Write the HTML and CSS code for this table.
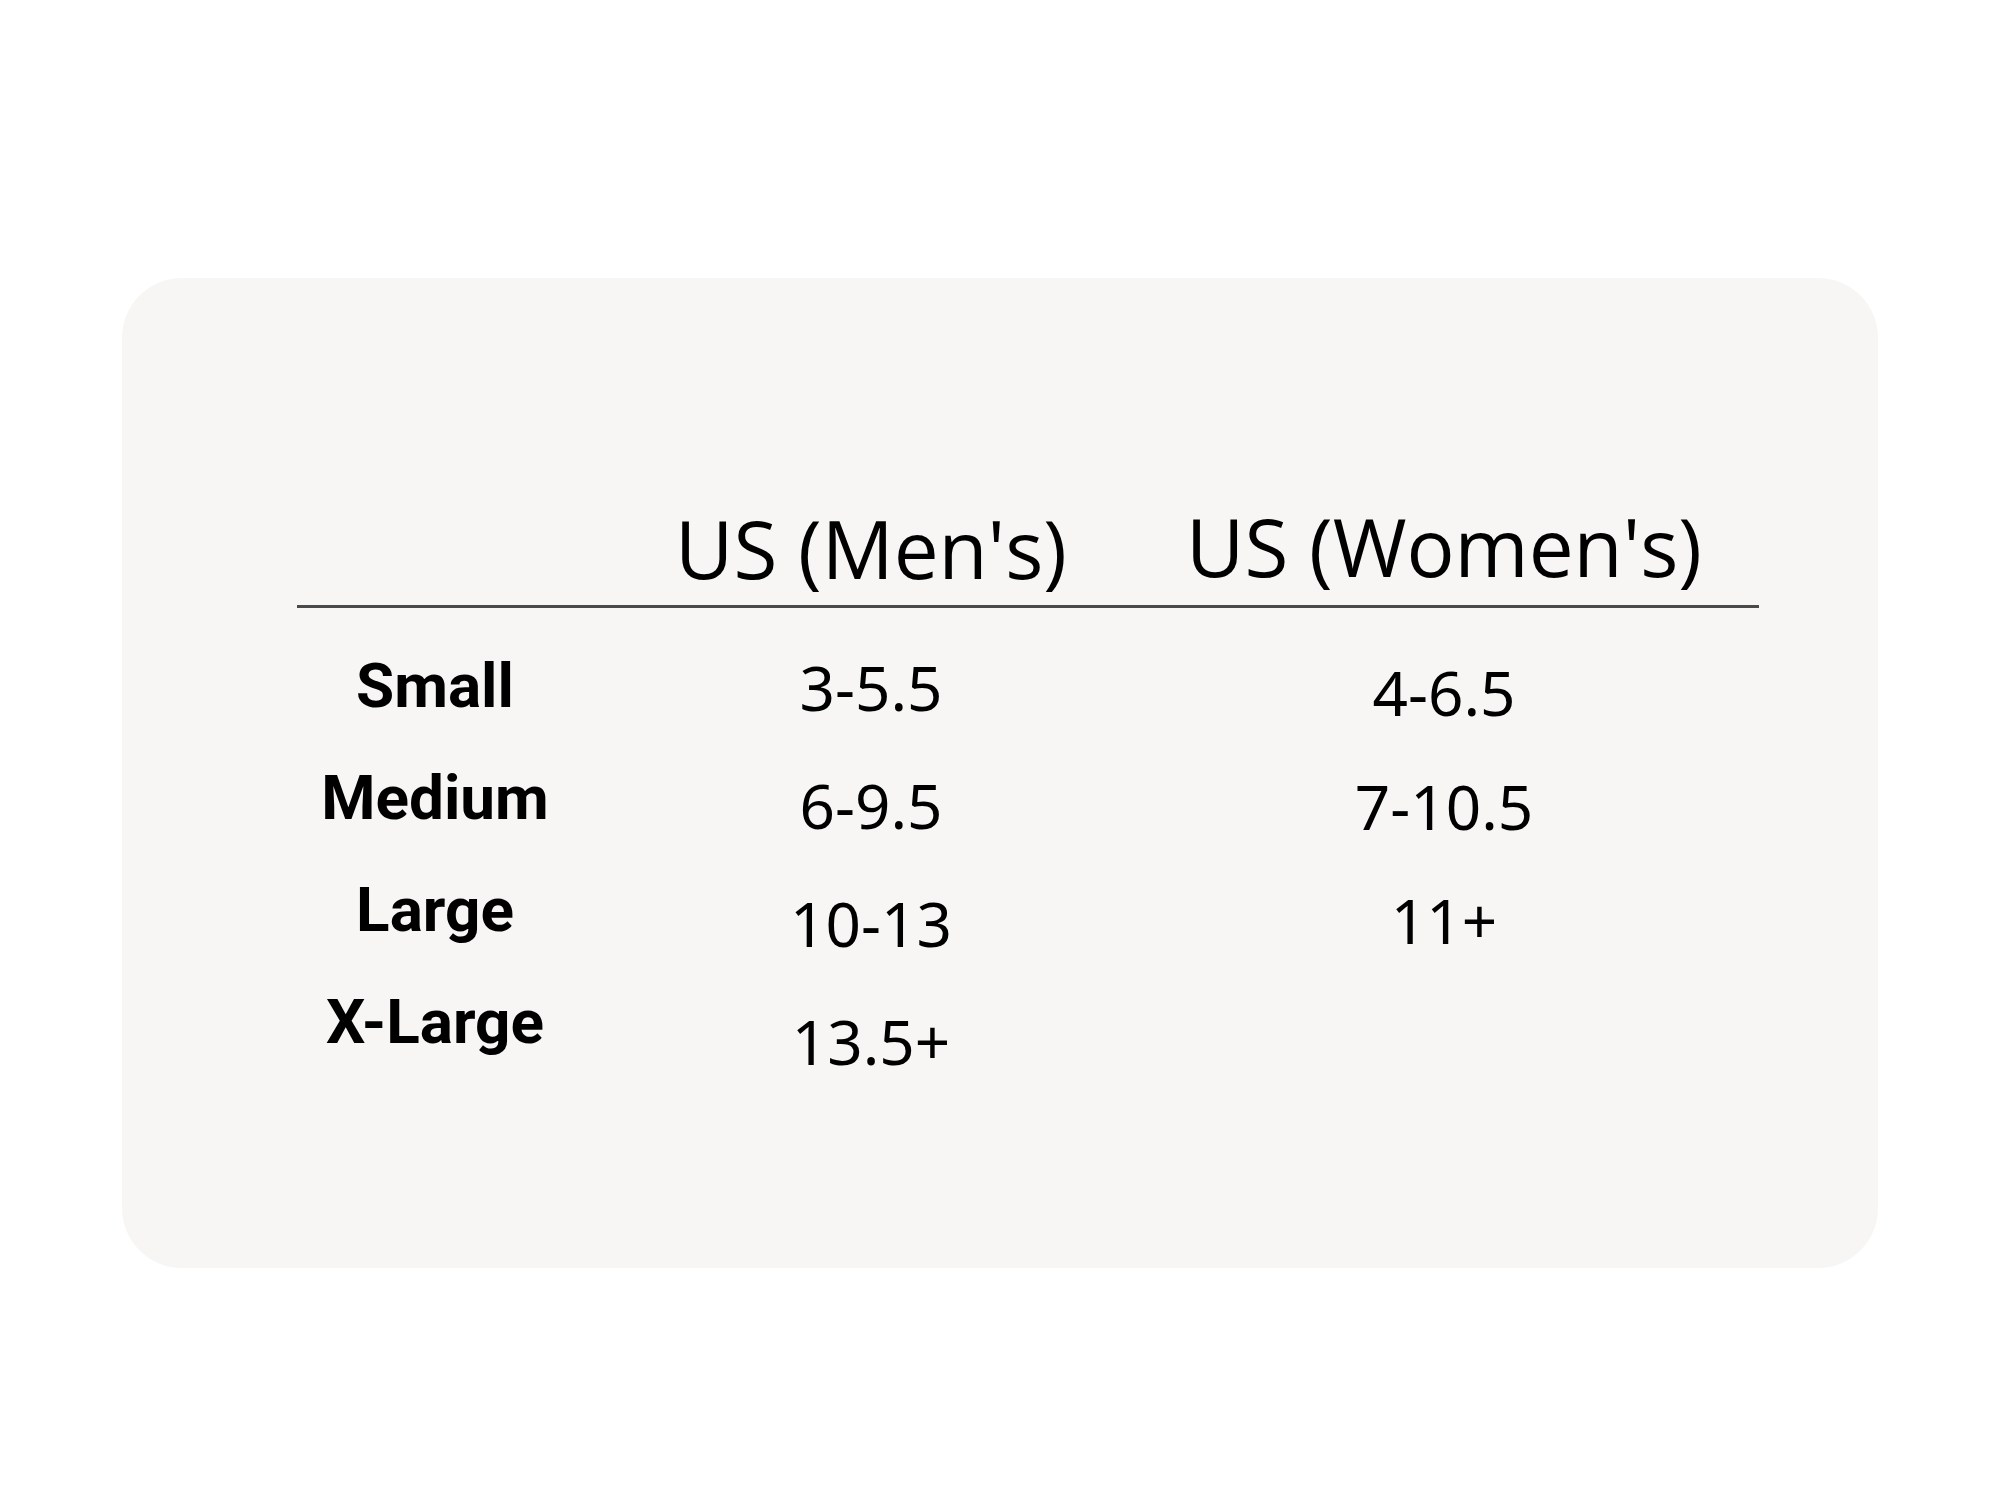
FILE: index.html
```html
<!DOCTYPE html>
<html lang="en">
<head>
<meta charset="utf-8">
<title>Size Chart</title>
<link rel="stylesheet" href="styles.css">
</head>
<body>
<div class="card">
  <div class="chart">
    <div class="head-row">
      <div class="head-empty"></div>
      <div class="head head-men">US (Men's)</div>
      <div class="head head-women">US (Women's)</div>
    </div>
    <div class="rule"></div>
    <div class="body-row">
      <div class="col labels">
        <div class="label">Small</div>
        <div class="label">Medium</div>
        <div class="label">Large</div>
        <div class="label">X-Large</div>
      </div>
      <div class="col men">
        <div class="val">3-5.5</div>
        <div class="val">6-9.5</div>
        <div class="val">10-13</div>
        <div class="val">13.5+</div>
      </div>
      <div class="col women">
        <div class="val">4-6.5</div>
        <div class="val">7-10.5</div>
        <div class="val">11+</div>
      </div>
    </div>
  </div>
</div>
</body>
</html>
```
FILE: styles.css
```css
html, body {
  margin: 0;
  padding: 0;
  background: #ffffff;
}
body {
  width: 2000px;
  height: 1500px;
  padding-top: 278px;
  padding-left: 122px;
  box-sizing: border-box;
  color: #000;
}
.card {
  width: 1756px;
  height: 990px;
  background: #f7f6f4;
  border-radius: 60px;
  box-sizing: border-box;
  padding-top: 218px;
  padding-left: 175px;
}
.chart {
  width: 1462px;
}
.head-row,
.body-row {
  display: grid;
  grid-template-columns: 276px 596px 550px;
}
.head-row {
  align-items: end;
  padding-bottom: 7px;
}
.head {
  font-family: "Open Sans", sans-serif;
  font-size: 80px;
  line-height: 100px;
  text-align: center;
  white-space: nowrap;
}
.head-women {
  padding-bottom: 2px;
}
.rule {
  height: 3px;
  background: #4a4a4a;
}
.col {
  display: flex;
  flex-direction: column;
  align-items: center;
}
.labels {
  padding-top: 22px;
}
.label {
  font-family: Roboto, sans-serif;
  font-weight: 700;
  font-size: 62px;
  line-height: 112px;
  white-space: nowrap;
}
.val {
  font-family: "Noto Sans", sans-serif;
  font-size: 62px;
  white-space: nowrap;
}
.men {
  padding-top: 20px;
}
.men .val {
  line-height: 118px;
}
.women {
  padding-top: 27px;
}
.women .val {
  line-height: 114px;
}
```
